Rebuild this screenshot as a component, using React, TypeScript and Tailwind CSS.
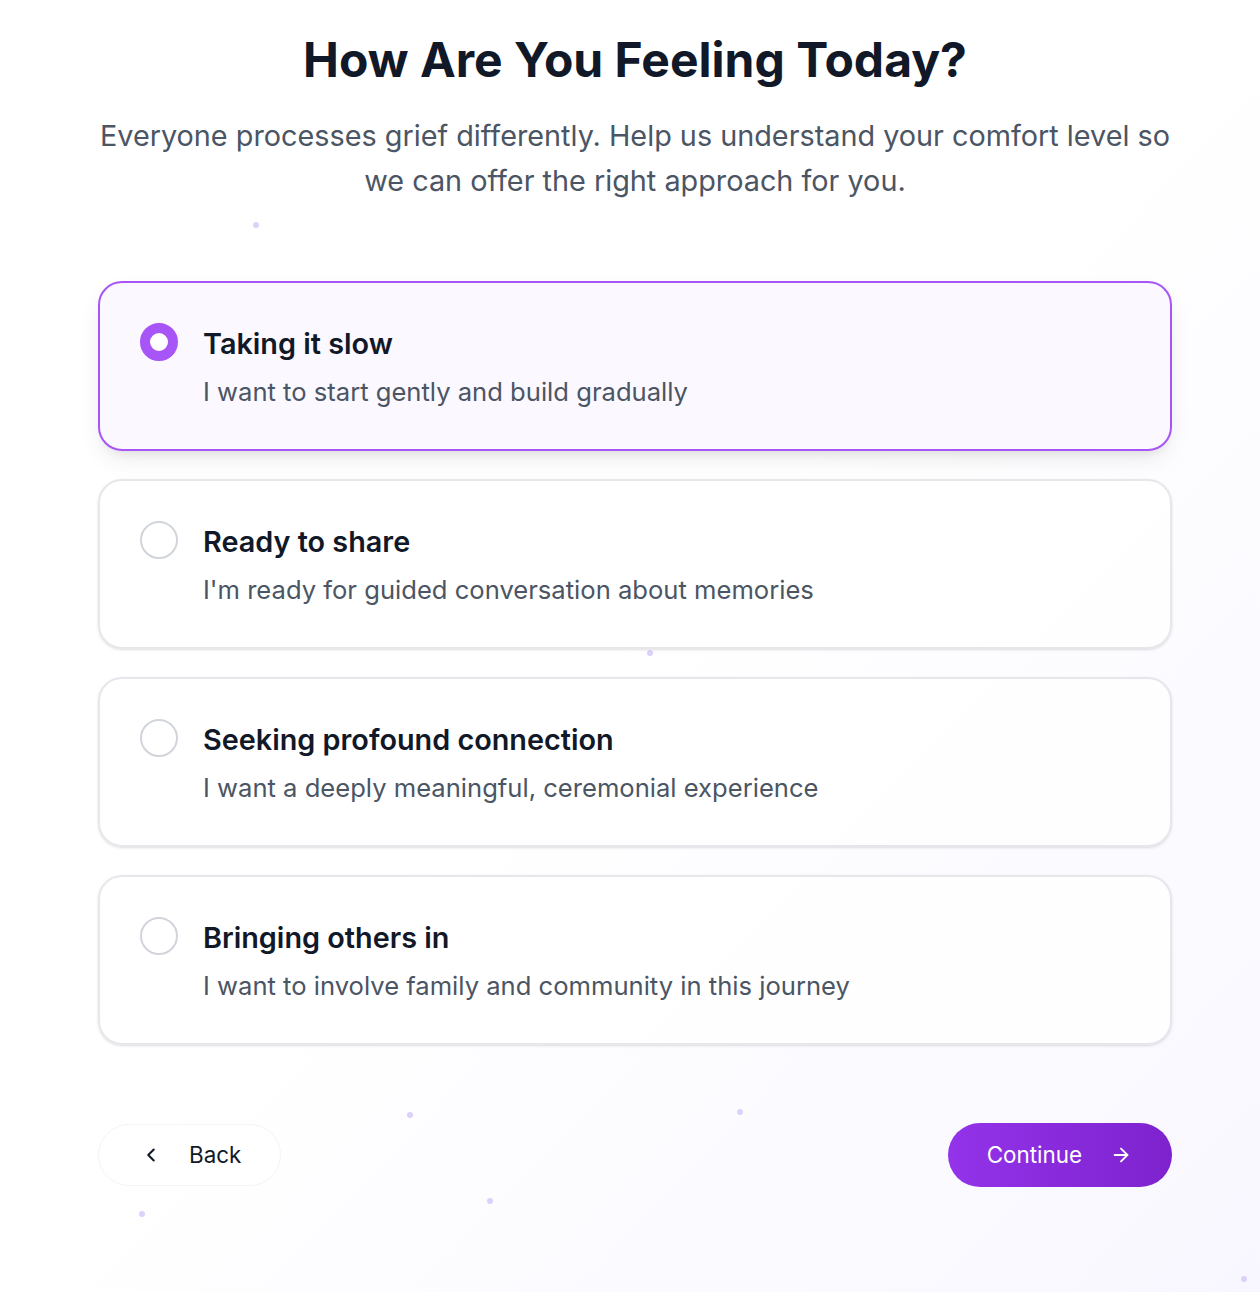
import { ChevronLeft, ArrowRight } from 'lucide-react'

const options = [
  { title: 'Taking it slow', desc: 'I want to start gently and build gradually' },
  { title: 'Ready to share', desc: "I'm ready for guided conversation about memories" },
  { title: 'Seeking profound connection', desc: 'I want a deeply meaningful, ceremonial experience' },
  { title: 'Bringing others in', desc: 'I want to involve family and community in this journey' },
]

const dots = [
  'left-[253px] top-[222px]',
  'left-[647px] top-[650px]',
  'left-[407px] top-[1112px]',
  'left-[737px] top-[1109px]',
  'left-[487px] top-[1198px]',
  'left-[139px] top-[1211px]',
  'left-[1241px] top-[1276px]',
]

function OptionCard({ title, desc, selected }: { title: string; desc: string; selected: boolean }) {
  return (
    <div
      className={
        selected
          ? 'flex gap-[25px] rounded-3xl border-2 border-[#a855f7] bg-[#fbf8ff] px-10 pt-[41px] pb-[40px] shadow-[0_10px_25px_-5px_rgba(0,0,0,0.1),0_8px_10px_-6px_rgba(0,0,0,0.06)]'
          : 'flex gap-[25px] rounded-3xl border-2 border-[#e5e7eb] bg-white/80 px-10 pt-[41px] pb-[40px] shadow-sm'
      }
    >
      {selected ? (
        <span className="-mt-[1px] h-[38px] w-[38px] shrink-0 rounded-full border-[10px] border-[#a855f7] bg-white" />
      ) : (
        <span className="-mt-[1px] h-[38px] w-[38px] shrink-0 rounded-full border-2 border-[#d1d5db] bg-white" />
      )}
      <div className="flex flex-col">
        <h2 className="text-[28.8px] leading-[40px] font-semibold text-[#111827]">{title}</h2>
        <p className="mt-[11px] text-[25.6px] leading-[34px] text-[#4b5563]">{desc}</p>
      </div>
    </div>
  )
}

export default function App() {
  return (
    <div className="relative min-h-[1292px] overflow-hidden bg-gradient-to-br from-white via-white to-[#f8f7ff] font-['Inter',sans-serif]">
      {dots.map((d) => (
        <span key={d} className={`absolute h-[6px] w-[6px] rounded-full bg-[#ddd0fb] ${d}`} />
      ))}
      <div className="relative ml-[98px] flex w-[1074px] flex-col pt-[30px]">
        <h1 className="text-center text-[48px] leading-[60px] font-bold text-[#111827]">
          How Are You Feeling Today?
        </h1>
        <p className="mt-[23px] text-center text-[28.8px] leading-[45px] text-[#4b5563]">
          Everyone processes grief differently. Help us understand your comfort level so we can offer the right
          approach for you.
        </p>

        <div className="mt-[78px] flex flex-col gap-[28px]">
          {options.map((o, i) => (
            <OptionCard key={o.title} title={o.title} desc={o.desc} selected={i === 0} />
          ))}
        </div>

        <div className="mt-[78px] flex items-center justify-between">
          <button className="flex h-[62px] items-center gap-[27px] rounded-full border border-[#f3f4f6] bg-white pl-[41px] pr-[39px] text-[22.4px] text-[#111827]">
            <ChevronLeft size={22} strokeWidth={2.25} />
            Back
          </button>
          <button className="flex h-[64px] items-center gap-[28px] rounded-full bg-gradient-to-r from-[#9333ea] to-[#7e22ce] pl-[39px] pr-[40px] text-[22.4px] text-white">
            Continue
            <ArrowRight size={22} strokeWidth={2} />
          </button>
        </div>
      </div>
    </div>
  )
}
